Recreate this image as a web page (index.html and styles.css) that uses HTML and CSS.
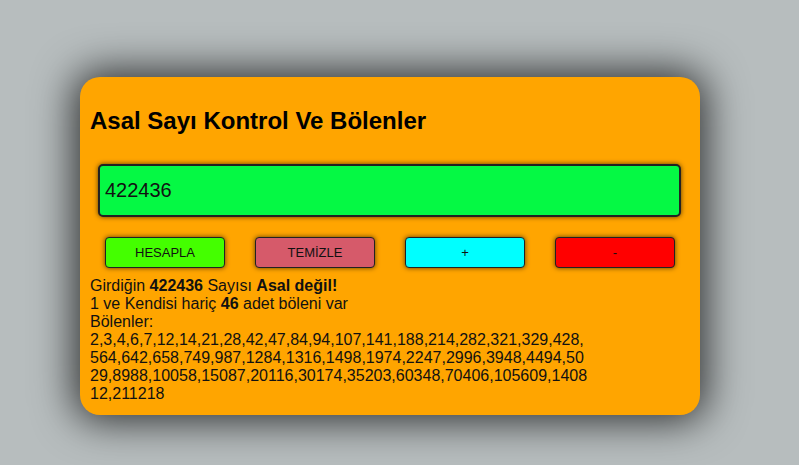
FILE: index.html
```html
<!DOCTYPE html>
<html lang="tr">
<head>
<meta charset="utf-8">
<title>Asal Sayı Kontrol</title>
<link rel="stylesheet" href="styles.css">
</head>
<body>
<div class="card">
  <h2 class="title">Asal Sayı Kontrol Ve Bölenler</h2>
  <input class="num" type="text" value="422436">
  <div class="buttons">
    <div class="cell"><button class="btn btn-calc">HESAPLA</button></div>
    <div class="cell"><button class="btn btn-clear">TEMİZLE</button></div>
    <div class="cell"><button class="btn btn-plus">+</button></div>
    <div class="cell"><button class="btn btn-minus">-</button></div>
  </div>
  <div class="result">
    Girdiğin <b>422436</b> Sayısı <b>Asal değil!</b><br>
    1 ve Kendisi hariç <b>46</b> adet böleni var<br>
    Bölenler:<br>
    2,3,4,6,7,12,14,21,28,42,47,84,94,107,141,188,214,282,321,329,428,564,642,658,749,987,1284,1316,1498,1974,2247,2996,3948,4494,5029,8988,10058,15087,20116,30174,35203,60348,70406,105609,140812,211218
  </div>
</div>
</body>
</html>
```

FILE: styles.css
```css
html, body {
  margin: 0;
  padding: 0;
}
body {
  background: #b7bdbe;
  font-family: "Liberation Sans", Arial, sans-serif;
  height: 465px;
  overflow: hidden;
}
.card {
  margin: 77px 0 0 80px;
  width: 600px;
  padding: 10px 10px 12px 10px;
  background: #ffa500;
  border-radius: 20px;
  box-shadow: 0 0 40px 6px rgba(0, 0, 0, 0.75);
}
.title {
  font-size: 24px;
  font-weight: bold;
  margin: 20px 0 29px 0;
  color: #000;
}
.num {
  display: block;
  box-sizing: border-box;
  width: 583px;
  height: 53px;
  margin: 0 0 0 8px;
  padding: 0 5px;
  background: #05f944;
  border: 2px solid #222;
  border-radius: 5px;
  box-shadow: 0 0 5px #5a3a00;
  font-family: "Liberation Sans", Arial, sans-serif;
  font-size: 20px;
  color: #111;
  outline: none;
}
.buttons {
  display: grid;
  grid-template-columns: repeat(4, 150px);
  margin-top: 20px;
}
.cell {
  display: flex;
  justify-content: center;
}
.btn {
  width: 120px;
  height: 31px;
  border: 1px solid #222;
  border-radius: 4px;
  box-shadow: 0 0 5px #5a3a00;
  font-family: "Liberation Sans", Arial, sans-serif;
  font-size: 13px;
  color: #111;
  padding: 0;
}
.btn-calc { background: #44ff00; }
.btn-clear { background: #d65a6a; }
.btn-plus { background: #00ffff; }
.btn-minus { background: #ff0000; }
.result {
  width: 500px;
  margin-top: 9px;
  font-size: 16px;
  color: #111;
  word-break: break-all;
}
```
